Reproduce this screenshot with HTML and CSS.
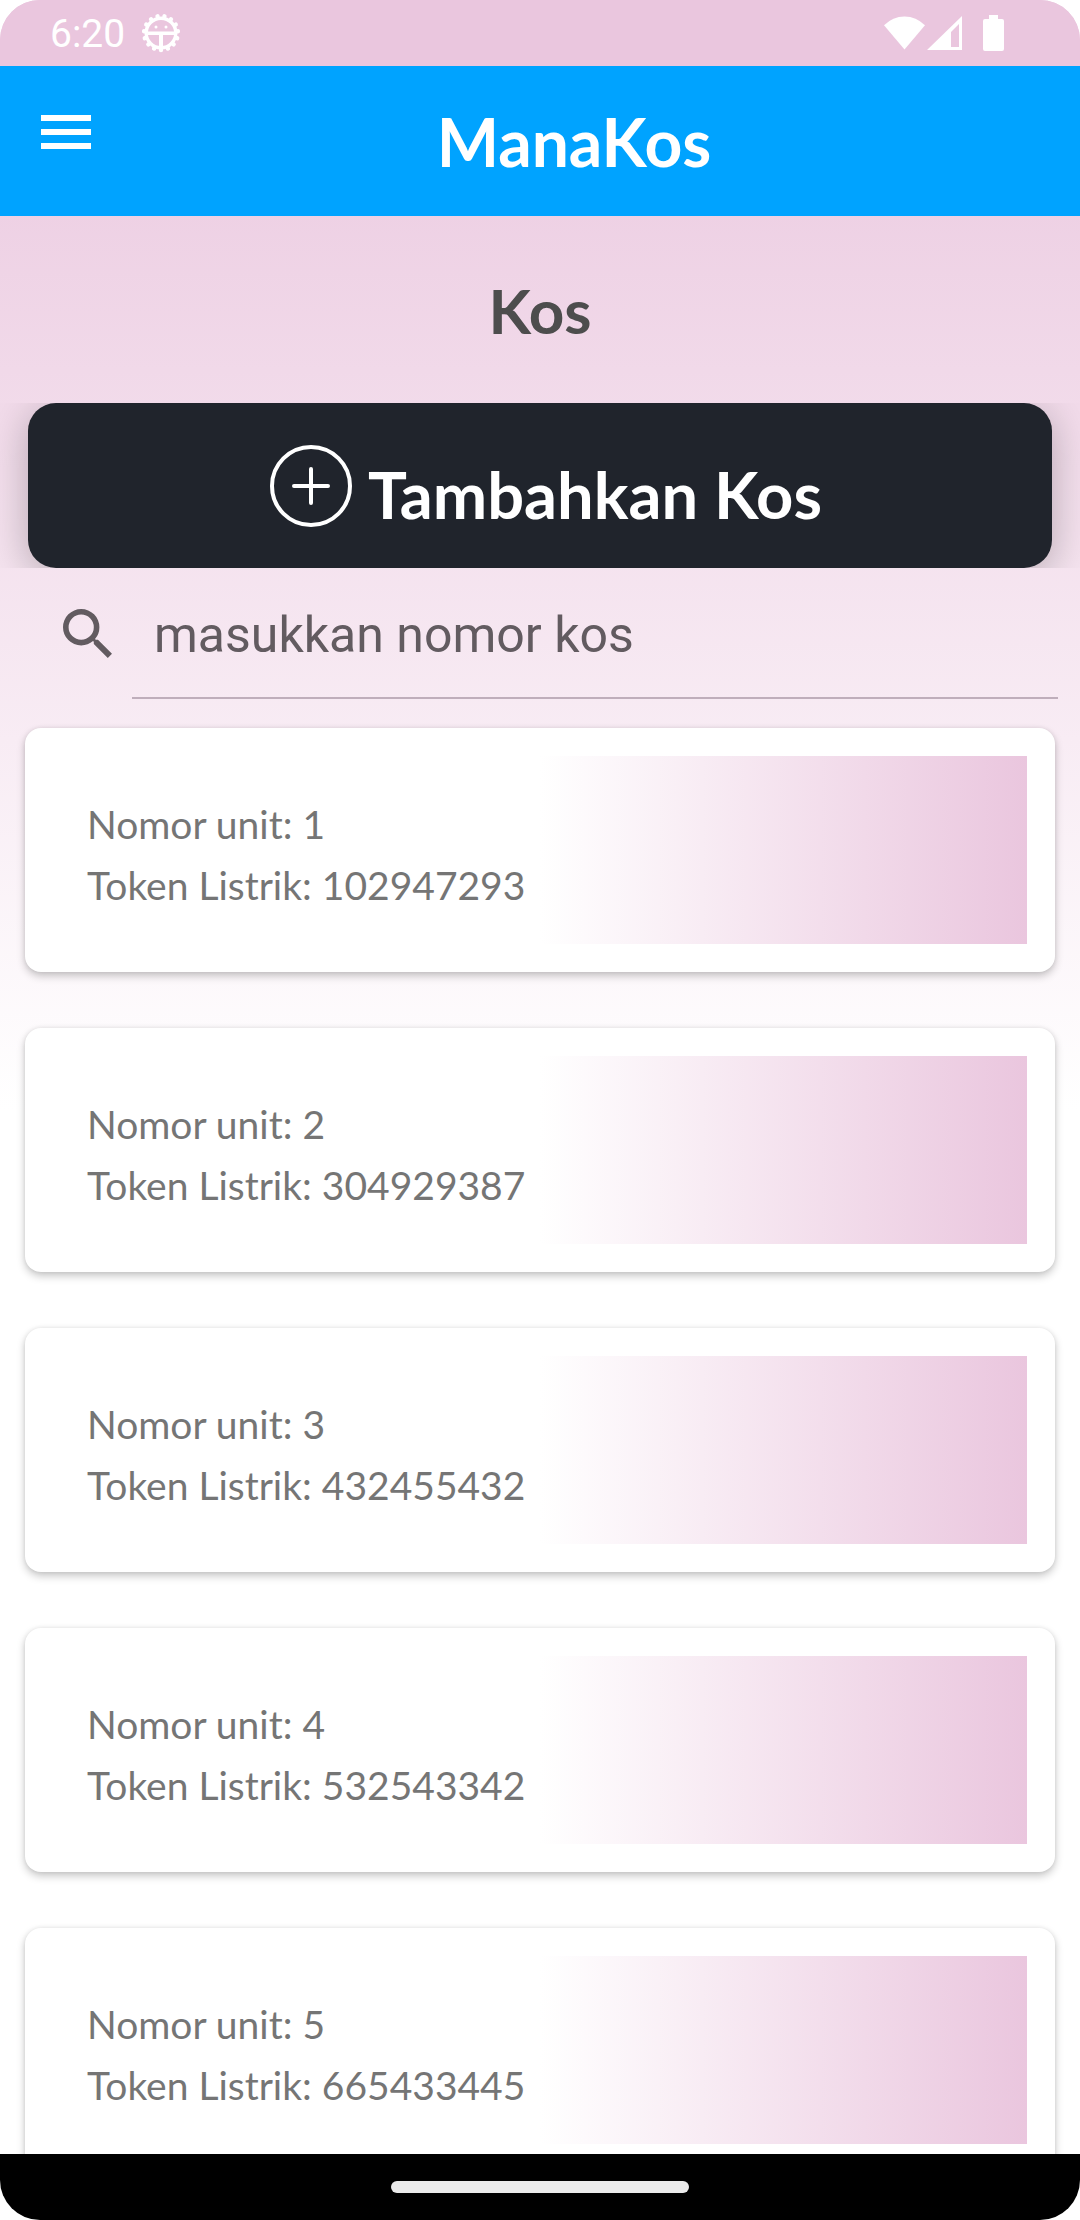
FILE: index.html
```html
<!DOCTYPE html>
<html lang="id">
<head>
<meta charset="utf-8">
<meta name="viewport" content="width=device-width, initial-scale=1">
<title>ManaKos</title>
<link rel="stylesheet" href="styles.css">
</head>
<body>
<div class="screen">
  <div class="status">
    <span class="status-time">6:20</span>
    <svg class="status-debug" viewBox="0 0 40 40" aria-hidden="true">
      <circle cx="20" cy="20" r="14.8" fill="none" stroke="#fff" stroke-width="3.4"/>
      <circle cx="20" cy="20" r="17" fill="none" stroke="#fff" stroke-width="4.4" stroke-linecap="round" pathLength="150" stroke-dasharray="0.01 9.99" stroke-dashoffset="-7.5"/>
      <path d="M7 18.500h26v3.500H22v13h-4V22H7z" fill="#fff"/>
      <circle cx="15" cy="14" r="1.5" fill="#fff"/><circle cx="25" cy="14" r="1.5" fill="#fff"/>
    </svg>
    <div class="status-right">
      <svg class="wifi" viewBox="0 0 42 36" aria-hidden="true"><path d="M21 35 0 10Q9 1 21 1t21 9z" fill="#fff"/></svg>
      <svg class="signal" viewBox="0 0 36 36" aria-hidden="true"><path fill="#fff" fill-rule="evenodd" d="M35 1v34H0zM32 9l-8 8v15h8z"/></svg>
      <svg class="battery" viewBox="0 0 21 36" aria-hidden="true"><path fill="#fff" d="M6 0h9v4h4q2 0 2 2v28q0 2-2 2H2q-2 0-2-2V6q0-2 2-2h4z"/></svg>
    </div>
  </div>
  <header class="bar">
    <button class="menu" type="button" aria-label="Menu">
      <svg viewBox="0 0 50 34" aria-hidden="true"><path fill="#fff" d="M0 0h50v6H0zM0 14h50v6H0zM0 28h50v6H0z"/></svg>
    </button>
    <span class="brand">ManaKos</span>
  </header>
  <main class="content">
    <h1 class="heading">Kos</h1>
    <div class="add-row">
      <button class="add" type="button">
        <svg viewBox="0 0 82 82" aria-hidden="true"><g fill="none" stroke="#fff" stroke-width="4"><circle cx="41" cy="41" r="39"/><path stroke-linecap="round" d="M41 24v34M24 41h34"/></g></svg>
        <span>Tambahkan Kos</span>
      </button>
    </div>
    <form class="search">
      <label class="search-icon" for="q" aria-label="Cari">
        <svg viewBox="3 3 17.5 17.5" aria-hidden="true"><path fill="#625b60" d="M15.5 14h-.79l-.28-.27A6.47 6.47 0 0 0 16 9.5 6.5 6.5 0 1 0 9.500 16c1.610 0 3.090-.59 4.230-1.570l.27.28v.79l5 4.990L20.490 19zm-6 0a4.500 4.500 0 1 1 0-9 4.500 4.500 0 0 1 0 9z"/></svg>
      </label>
      <input class="search-input" id="q" type="text" placeholder="masukkan nomor kos">
    </form>
    <ul class="units">
      <li class="unit"><div class="unit-body"><p>Nomor unit: 1</p><p>Token Listrik: 102947293</p></div></li>
      <li class="unit"><div class="unit-body"><p>Nomor unit: 2</p><p>Token Listrik: 304929387</p></div></li>
      <li class="unit"><div class="unit-body"><p>Nomor unit: 3</p><p>Token Listrik: 432455432</p></div></li>
      <li class="unit"><div class="unit-body"><p>Nomor unit: 4</p><p>Token Listrik: 532543342</p></div></li>
      <li class="unit"><div class="unit-body"><p>Nomor unit: 5</p><p>Token Listrik: 665433445</p></div></li>
    </ul>
  </main>
  <nav class="gesture"><span class="pill"></span></nav>
</div>
</body>
</html>
```
FILE: styles.css
```css
* { box-sizing: border-box; }
body { margin: 0; background: #fff; font-family: Lato, "Noto Sans", sans-serif; }
button { border: 0; padding: 0; font: inherit; color: inherit; cursor: pointer; }
svg { display: block; }

.screen {
  display: flex;
  flex-direction: column;
  height: 100vh;
  border-radius: 40px;
  overflow: hidden;
  background: linear-gradient(#eac6de, #fff 50%);
}

.status {
  flex: none;
  display: flex;
  align-items: center;
  height: 66px;
  padding: 0 76px 0 50px;
  background: #eac6de;
  color: #fff;
  font-family: Roboto, sans-serif;
  font-size: 39px;
}
.status-time { padding-top: 2px; }
.status-debug { width: 40px; height: 40px; margin-left: 16px; }
.status-right { display: flex; align-items: center; margin-left: auto; }
.wifi { width: 41px; height: 36px; }
.signal { width: 36px; height: 36px; margin-left: 2px; }
.battery { width: 21px; height: 36px; margin-left: 20px; }

.bar {
  flex: none;
  display: grid;
  grid-template-columns: 132px 1fr 64px;
  align-items: center;
  height: 150px;
  background: #00a3ff;
  color: #fff;
}
.menu { justify-self: center; padding-bottom: 18px; background: none; }
.menu svg { width: 50px; height: 34px; }
.brand { padding-top: 2px; text-align: center; font-size: 66px; font-weight: 700; line-height: 80px; }

.content {
  flex: 1;
  min-height: 0;
  display: flex;
  flex-direction: column;
  overflow: hidden;
}
.heading {
  flex: none;
  margin: 0;
  padding: 56px 0 55px;
  text-align: center;
  font-size: 62px;
  line-height: 76px;
  color: #4d4d4d;
}
.add-row { flex: none; padding: 0 28px; overflow: hidden; }
.add {
  display: flex;
  align-items: center;
  justify-content: center;
  gap: 16px;
  width: 100%;
  height: 165px;
  padding-left: 12px;
  border-radius: 28px;
  background: #20242c;
  color: #fff;
  font-size: 65px;
  font-weight: 700;
  line-height: 76px;
  box-shadow: 0 8px 40px rgba(0, 0, 0, .26);
}
.add svg { width: 82px; height: 82px; }
.add span { padding-top: 16px; }

.search { flex: none; display: flex; height: 160px; padding: 0 22px 0 63px; }
.search-icon { width: 69px; padding-top: 41px; }
.search-icon svg { width: 49px; height: 49px; }
.search-input {
  flex: 1;
  min-width: 0;
  height: 131px;
  padding: 4px 22px 0;
  border: 0;
  border-bottom: 2px solid #bfaebb;
  outline: 0;
  background: none;
  color: #625b60;
  font-family: Roboto, sans-serif;
  font-size: 50px;
}
.search-input::placeholder { color: #625b60; opacity: 1; }

.units {
  flex: 1;
  min-height: 0;
  display: flex;
  flex-direction: column;
  gap: 56px;
  margin: 0;
  padding: 0 25px;
  list-style: none;
}
.unit {
  flex: none;
  padding: 28px;
  border-radius: 16px;
  background: #fff;
  box-shadow: 0 4px 8px rgba(0, 0, 0, .22), 0 0 4px rgba(0, 0, 0, .08);
}
.unit-body {
  padding: 38px 34px 28px;
  background: linear-gradient(to right, #fff 50%, #eac6de);
  color: #757575;
  font-size: 39px;
  line-height: 61px;
}
.unit-body p { margin: 0; }

.gesture {
  flex: none;
  display: flex;
  align-items: center;
  justify-content: center;
  height: 66px;
  background: #000;
}
.pill { width: 298px; height: 12px; border-radius: 6px; background: #ebebeb; }
```
